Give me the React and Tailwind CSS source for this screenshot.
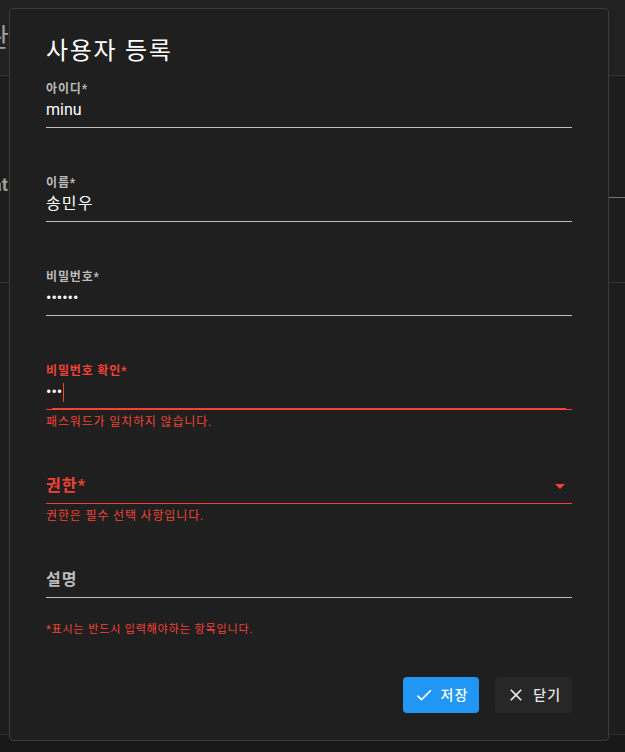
import React from "react";

const FONT = "font-['Roboto','Noto_Sans_CJK_KR',sans-serif]";
const KR = "tracking-[0.07em]";

function CheckIcon() {
  return (
    <svg width="20" height="20" viewBox="0 0 24 24" fill="currentColor">
      <path d="M9 16.17 4.83 12l-1.42 1.41L9 19 21 7l-1.41-1.41z" />
    </svg>
  );
}

function CloseIcon() {
  return (
    <svg width="20" height="20" viewBox="0 0 24 24" fill="currentColor">
      <path d="M19 6.41 17.59 5 12 10.59 6.41 5 5 6.41 10.59 12 5 17.59 6.41 19 12 13.41 17.59 19 19 17.59 13.41 12z" />
    </svg>
  );
}

function Field({ label, value, error, helper, focused, korean, children }) {
  return (
    <div className="h-[94px] flex flex-col">
      <div
        className={
          "h-4 text-[12px] leading-4 font-bold tracking-[0.07em] " +
          (error ? "text-[#f44336]" : "text-[#bcbcbc]")
        }
      >
        {label}
      </div>
      <div
        className={
          "relative mt-[1px] h-[30px] pb-[5px] border-b flex items-center " +
          (error ? "border-[#f44336]" : "border-[#bcbcbc]")
        }
      >
        {children ? (
          children
        ) : (
          <span className={"text-[16px] leading-6 text-white " + (korean ? "tracking-[0.07em]" : "")}>{value}</span>
        )}
        {focused && (
          <div className="absolute left-[6px] right-[6px] bottom-[-1px] h-[2px] bg-[#f44336]" />
        )}
      </div>
      {helper && (
        <div className="mt-[4px] text-[12px] leading-4 tracking-[0.07em] text-[#f44336]">{helper}</div>
      )}
    </div>
  );
}

export default function App() {
  return (
    <div className={"relative w-full h-[752px] overflow-hidden bg-[#1d1d1d] flex flex-col " + FONT}>
      {/* background page */}
      <div className="h-[76px] shrink-0 bg-[#212121] border-b border-[#333333] flex items-center">
        <span className="ml-[-15px] text-[26px] leading-8 text-[#9e9e9e]">관</span>
      </div>
      <div className="h-[207px] shrink-0 border-b border-[#333333] flex flex-col">
        <div className="h-[122px] flex justify-end items-end">
          <div className="w-[16px] border-b border-[#777777]" />
        </div>
        <div className="flex-1" />
        <div className="absolute left-[-8px] top-[171px] text-[18px] font-bold text-[#9e9e9e]">at</div>
      </div>
      <div className="flex-1 border-b border-[#2e2e2e]" />
      <div className="h-[17px] shrink-0 bg-[#181818]" />

      {/* dialog */}
      <div className="absolute left-[9px] top-[8px] w-[600px] h-[733px] rounded-[4px] border border-[#3c3c3c] bg-[#1f1f1f] px-[36px] pt-[26px] flex flex-col">
        <div className={"h-8 text-[24px] leading-8 text-white " + KR}>사용자 등록</div>
        <div className="mt-[14px] flex flex-col">
          <Field label="아이디*" value="minu" />
          <Field label="이름*" value="송민우" korean />
          <Field label="비밀번호*">
            <span className="text-[16px] leading-6 text-white">••••••</span>
          </Field>
          <Field label="비밀번호 확인*" error focused helper="패스워드가 일치하지 않습니다.">
            <span className="text-[16px] leading-6 text-white">•••</span>
            <span className="ml-[1px] w-px h-[19px] bg-[#f44336]" />
          </Field>
          <Field label="" error helper="권한은 필수 선택 사항입니다.">
            <div className="flex-1 flex items-center justify-between">
              <span className={"text-[16px] leading-6 font-bold text-[#f44336] " + KR}>권한*</span>
              <svg width="24" height="24" viewBox="0 0 24 24" fill="#f44336">
                <path d="M7 10l5 5 5-5z" />
              </svg>
            </div>
          </Field>
          <div className="flex flex-col">
            <div className="h-4" />
            <div className="mt-[1px] h-[30px] pb-[5px] border-b border-[#bcbcbc] flex items-center">
              <span className={"text-[16px] leading-6 font-bold text-[#bcbcbc] " + KR}>설명</span>
            </div>
          </div>
        </div>
        <div className={"mt-[24px] text-[11px] leading-4 text-[#f44336] tracking-[0.08em]"}>
          *표시는 반드시 입력해야하는 항목입니다.
        </div>
        <div className="mt-[39px] flex justify-end gap-4">
          <button className="h-9 px-[11px] gap-[7px] flex items-center rounded-[4px] bg-[#2196f3] text-white text-[14px] font-medium">
            <CheckIcon />
            <span className={KR}>저장</span>
          </button>
          <button className="h-9 px-[11px] gap-[7px] flex items-center rounded-[4px] bg-[#272727] text-[#e8e8e8] text-[14px] font-medium">
            <CloseIcon />
            <span className={KR}>닫기</span>
          </button>
        </div>
      </div>
    </div>
  );
}
